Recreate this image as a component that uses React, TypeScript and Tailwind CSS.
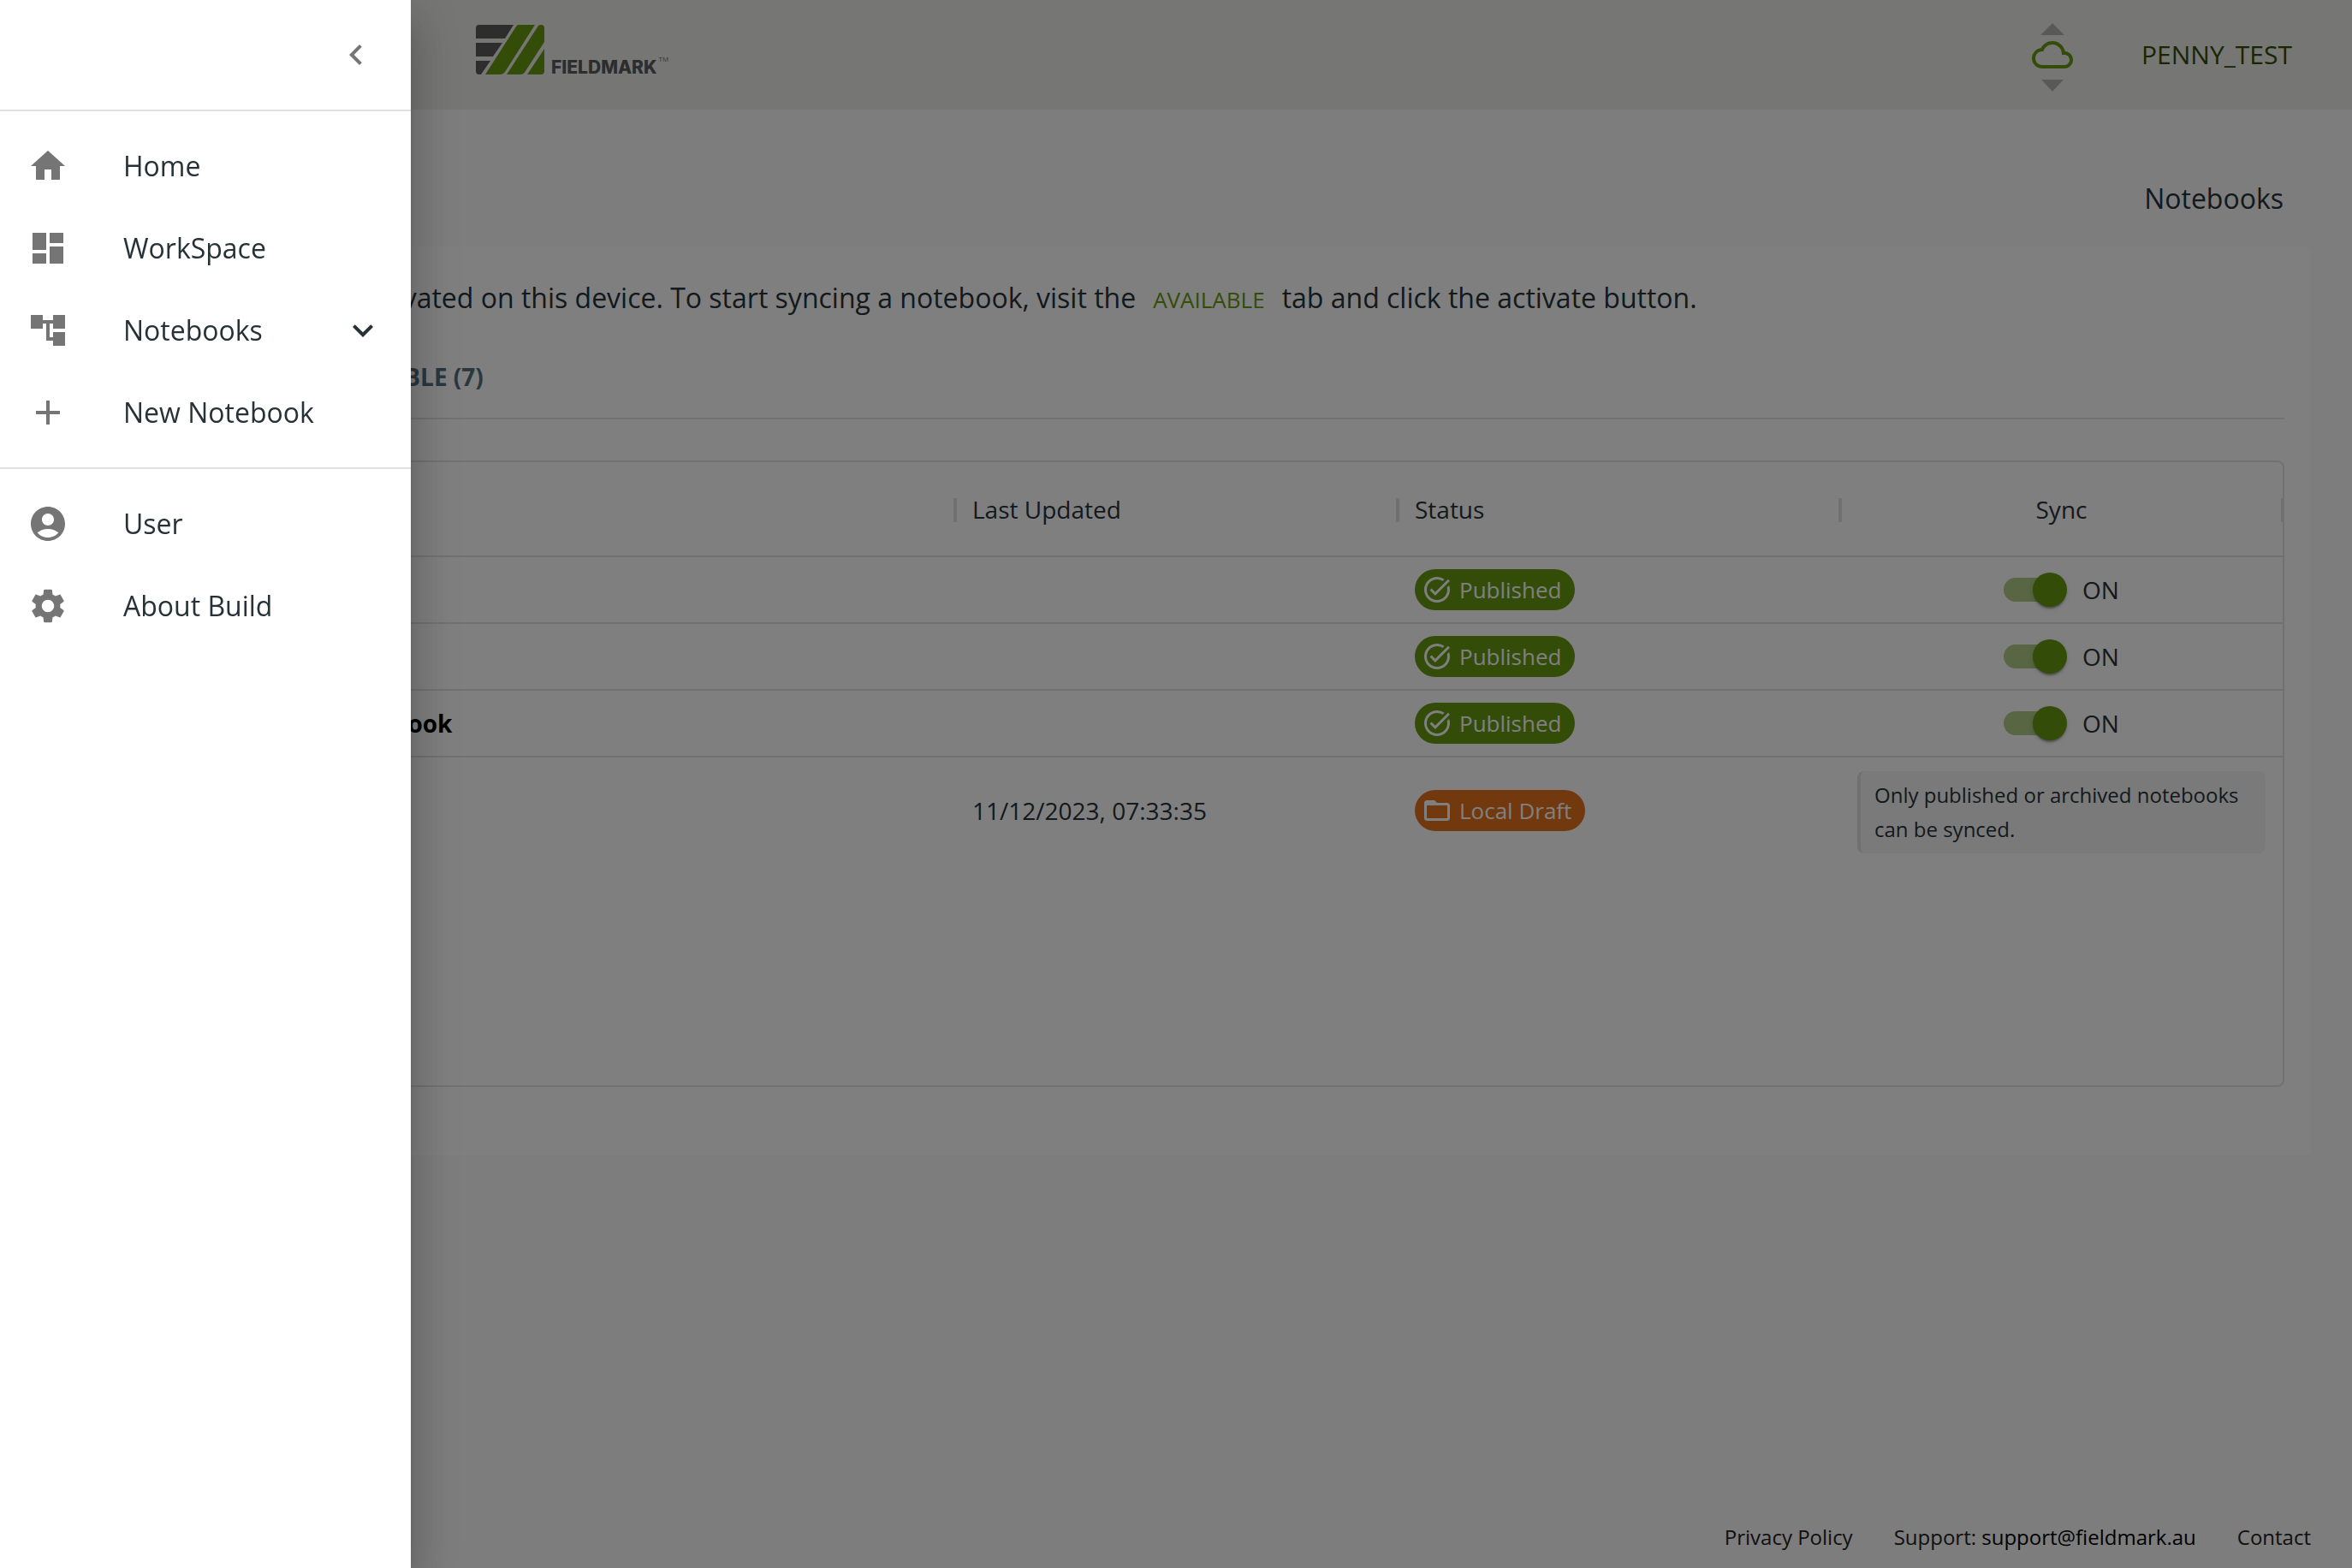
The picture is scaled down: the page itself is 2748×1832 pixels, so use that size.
import type { ReactNode } from "react";
import {
  MdAccountCircle,
  MdAccountTree,
  MdAdd,
  MdChevronLeft,
  MdCloudQueue,
  MdDashboard,
  MdExpandMore,
  MdFolderOpen,
  MdHome,
  MdSettings,
  MdTaskAlt,
} from "react-icons/md";

type Notebook = {
  name: string;
  updated: string;
  status: "published" | "draft";
};

const notebooks: Notebook[] = [
  { name: "", updated: "", status: "published" },
  { name: "", updated: "", status: "published" },
  { name: "Campus Survey Test Notebook", updated: "", status: "published" },
  { name: "", updated: "11/12/2023, 07:33:35", status: "draft" },
];

function Logo() {
  return (
    <a href="#home" className="flex items-end gap-2 pb-3" aria-label="Fieldmark">
      <svg width="80" height="58" viewBox="0 0 80 58">
        <defs>
          <clipPath id="badge">
            <rect width="80" height="58" rx="4" />
          </clipPath>
        </defs>
        <g clipPath="url(#badge)">
          <path fill="#5a5a5a" d="M0 0H44L34 16H0ZM0 21H31L20 37H0ZM0 42H17L6 58H0Z" />
          <path
            fill="#669911"
            d="M50 0H69L34 55Q32 58 29 58H11L47 2Q48 0 50 0ZM75 0H80V20L58 54Q56 58 52 58H36L73 1ZM80 28V58H60Z"
          />
        </g>
      </svg>
      <span className="font-['Inter',sans-serif] text-[21px] leading-[16px] font-extrabold text-[#5a5a5a]">FIELDMARK</span>
      <span className="mb-3.5 -ml-1.5 text-[8px] leading-[8px] text-[#6a6a68]">TM</span>
    </a>
  );
}

function SyncStatus() {
  return (
    <div className="flex w-12 flex-col items-center pt-1.5 text-[#669911]">
      <svg width="28" height="14" viewBox="0 0 28 14" fill="#b3b3b0">
        <path d="M14 0L28 14H0Z" />
      </svg>
      <MdCloudQueue size={48} className="-my-px" />
      <svg width="28" height="14" viewBox="0 0 28 14" fill="#b3b3b0" className="mt-1.5">
        <path d="M1 0H27L14 14Z" />
      </svg>
    </div>
  );
}

function StatusChip({ status }: { status: Notebook["status"] }) {
  const published = status === "published";
  return (
    <span
      className={`inline-flex h-12 items-center gap-2 rounded-full pr-4 pl-2 text-[26px] leading-none text-white ${
        published ? "bg-[#669911]" : "bg-[#e4701c]"
      }`}
    >
      {published ? <MdTaskAlt size={36} /> : <MdFolderOpen size={36} />}
      <span>{published ? "Published" : "Local Draft"}</span>
    </span>
  );
}

function SyncSwitch() {
  return (
    <label className="flex items-center justify-center gap-6">
      <span className="relative h-7 w-[68px]">
        <input
          type="checkbox"
          role="switch"
          defaultChecked
          className="block h-7 w-[68px] appearance-none rounded-full bg-[#669911]/50"
        />
        <span className="pointer-events-none absolute -top-1.5 -right-1.5 h-10 w-10 rounded-full bg-[#669911] shadow-[0_4px_2px_-2px_rgba(0,0,0,0.2),0_2px_2px_rgba(0,0,0,0.14),0_2px_6px_rgba(0,0,0,0.12)]" />
      </span>
      <span>ON</span>
    </label>
  );
}

function HeaderCell({ children, center = false }: { children: ReactNode; center?: boolean }) {
  return (
    <th
      scope="col"
      className={`relative h-[111px] border-b-2 border-[#e3e3e3] px-5 font-medium ${center ? "text-center" : "text-left"}`}
    >
      {children}
      <span className="absolute top-[42px] -right-0.5 h-7 w-1 bg-[#e0e0e0]" />
    </th>
  );
}

function NotebookTable() {
  return (
    <div className="min-h-[732px] overflow-hidden rounded-lg border-2 border-[#e3e3e3]">
      <table className="w-full table-fixed border-separate border-spacing-0 text-[28px] leading-10">
        <colgroup>
          <col className="w-2/5" />
          <col className="w-1/5" />
          <col className="w-1/5" />
          <col className="w-1/5" />
        </colgroup>
        <thead>
          <tr>
            <HeaderCell>Name</HeaderCell>
            <HeaderCell>Last Updated</HeaderCell>
            <HeaderCell>Status</HeaderCell>
            <HeaderCell center>Sync</HeaderCell>
          </tr>
        </thead>
        <tbody className="[&>tr:not(:last-child)>td]:border-b-2 [&>tr:not(:last-child)>td]:border-[#e3e3e3]">
          {notebooks.map((n, i) => (
            <tr key={i} className="h-[78px]">
              <td className="px-5 font-bold text-black">{n.name}</td>
              <td className="px-5">{n.updated}</td>
              <td className="px-5 align-middle">
                <div className="flex">
                  <StatusChip status={n.status} />
                </div>
              </td>
              <td className="px-5">
                {n.status === "published" ? (
                  <SyncSwitch />
                ) : (
                  <p className="mt-4 mb-3 rounded-lg border-l-4 border-[#e0e0e0] bg-[#f5f5f5] py-2 pl-4 text-2xl leading-10">
                    Only published or archived notebooks can be synced.
                  </p>
                )}
              </td>
            </tr>
          ))}
        </tbody>
      </table>
    </div>
  );
}

function NavItem({ icon, label, trailing }: { icon: ReactNode; label: string; trailing?: ReactNode }) {
  return (
    <li>
      <button type="button" className="flex h-24 w-full items-center px-8 text-left text-[32px] leading-[48px]">
        <span className="w-28 text-[#757575]">{icon}</span>
        <span className="flex-1">{label}</span>
        {trailing}
      </button>
    </li>
  );
}

function Drawer() {
  return (
    <aside className="fixed inset-y-0 left-0 w-[480px] bg-white shadow-[0_16px_20px_-10px_rgba(0,0,0,0.2),0_32px_48px_4px_rgba(0,0,0,0.14),0_12px_60px_10px_rgba(0,0,0,0.12)]">
      <div className="flex h-[130px] items-center justify-end border-b-2 border-[#e0e0e0] px-6">
        <button type="button" aria-label="Close menu" className="p-4 text-[#757575]">
          <MdChevronLeft size={48} />
        </button>
      </div>
      <nav>
        <ul className="border-b-2 border-[#e0e0e0] py-4">
          <NavItem icon={<MdHome size={48} />} label="Home" />
          <NavItem icon={<MdDashboard size={48} />} label="WorkSpace" />
          <NavItem icon={<MdAccountTree size={48} />} label="Notebooks" trailing={<MdExpandMore size={48} />} />
          <NavItem icon={<MdAdd size={48} />} label="New Notebook" />
        </ul>
        <ul className="py-4">
          <NavItem icon={<MdAccountCircle size={48} />} label="User" />
          <NavItem icon={<MdSettings size={48} />} label="About Build" />
        </ul>
      </nav>
    </aside>
  );
}

export default function App() {
  return (
    <div className="flex min-h-screen flex-col bg-[#fafafb] font-['Open_Sans',sans-serif] text-[#263238]">
      <header className="flex h-32 items-center justify-between bg-[#edeeeb] pr-[70px] pl-[556px]">
        <Logo />
        <div className="flex items-center gap-20">
          <SyncStatus />
          <button type="button" className="text-[30px] leading-10 text-[#334c08]">
            PENNY_TEST
          </button>
        </div>
      </header>

      <main className="px-12">
        <nav aria-label="Breadcrumb" className="flex h-40 items-center justify-end px-8 pt-12">
          <a href="#notebooks" className="text-[32px] leading-[48px]">
            Notebooks
          </a>
        </nav>
        <section className="rounded-lg bg-white pt-9 pr-[31px] pb-20 pl-8">
          <p className="flex h-12 items-baseline text-[32px] leading-[48px]">
            You have 4 notebooks activated on this device. To start syncing a notebook, visit the
            <button type="button" className="mx-5 text-[26px] font-medium text-[#669911]">
              AVAILABLE
            </button>
            tab and click the activate button.
          </p>
          <div role="tablist" className="mt-5 mb-12 flex h-[98px] items-center border-b-2 border-[#e3e3e3] text-[28px] font-bold">
            <button type="button" role="tab" aria-selected="true" className="px-8 text-[#669911]">
              ACTIVATED (4)
            </button>
            <button type="button" role="tab" aria-selected="false" className="px-8 text-[#546e7a]">
              AVAILABLE (7)
            </button>
          </div>
          <NotebookTable />
        </section>
      </main>

      <footer className="mt-auto flex justify-end gap-12 px-12 pb-4 text-2xl leading-10 text-[#222222]">
        <a href="#privacy">Privacy Policy</a>
        <span>
          Support: <a href="mailto:support@fieldmark.au" className="text-black">support@fieldmark.au</a>
        </span>
        <a href="#contact">Contact</a>
      </footer>

      <div className="fixed inset-0 bg-black/50" />
      <Drawer />
    </div>
  );
}
